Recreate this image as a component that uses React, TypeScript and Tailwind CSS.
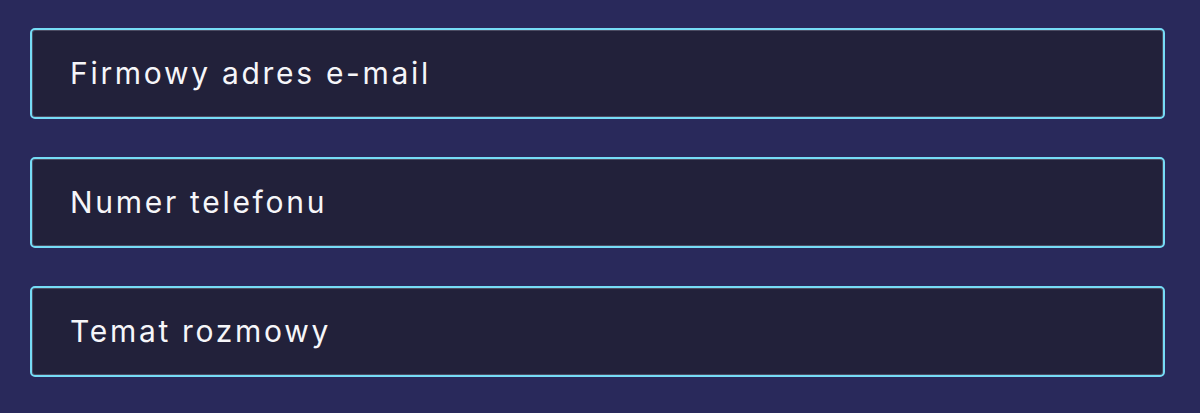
export default function App() {
  const fields = ["Firmowy adres e-mail", "Numer telefonu", "Temat rozmowy"];

  return (
    <div className="w-screen h-[413px] bg-[#29295b] pt-[28px] pl-[30px] pr-[35px] flex flex-col gap-[38px]">
      {fields.map((label) => (
        <div
          key={label}
          className="h-[91px] rounded-[5px] border-2 border-[#76dcf6] bg-[#22213a] shadow-[inset_0_0_0_1px_#4c4c62] flex items-center pl-[38px]"
        >
          <span
            className="text-[30px] text-[#f6f6f9] tracking-[2.7px] font-normal"
            style={{ fontFamily: "Inter, 'Liberation Sans', sans-serif" }}
          >
            {label}
          </span>
        </div>
      ))}
    </div>
  );
}
